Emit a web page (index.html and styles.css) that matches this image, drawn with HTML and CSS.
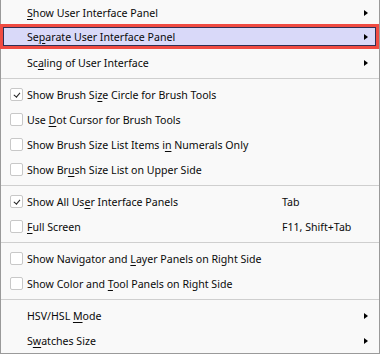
FILE: index.html
```html
<!DOCTYPE html>
<html>
<head>
<meta charset="utf-8">
<link rel="stylesheet" href="styles.css">
</head>
<body>
<div class="menu">
  <div class="item sub"><span class="label"><u>S</u>how User Interface Panel</span><span class="arrow"></span></div>
  <div class="item sub active"><span class="label">Se<u>p</u>arate User Interface Panel</span><span class="arrow"></span></div>
  <div class="item sub"><span class="label">Sc<u>a</u>ling of User Interface</span><span class="arrow"></span></div>
  <div class="sep"></div>
  <div class="item"><span class="check on"></span><span class="label">Show Brush Si<u>z</u>e Circle for Brush Tools</span></div>
  <div class="item"><span class="check"></span><span class="label">Use <u>D</u>ot Cursor for Brush Tools</span></div>
  <div class="item"><span class="check"></span><span class="label">Show Brush Size List Items i<u>n</u> Numerals Only</span></div>
  <div class="item"><span class="check"></span><span class="label">Show Br<u>u</u>sh Size List on Upper Side</span></div>
  <div class="sep"></div>
  <div class="item"><span class="check on"></span><span class="label">Show All Us<u>e</u>r Interface Panels</span><span class="key">Tab</span></div>
  <div class="item"><span class="check"></span><span class="label"><u>F</u>ull Screen</span><span class="key">F11, Shift+Tab</span></div>
  <div class="sep"></div>
  <div class="item"><span class="check"></span><span class="label">Show Navigator and <u>L</u>ayer Panels on Right Side</span></div>
  <div class="item"><span class="check"></span><span class="label">Show Color and <u>T</u>ool Panels on Right Side</span></div>
  <div class="sep"></div>
  <div class="item sub"><span class="label">HSV/HSL <u>M</u>ode</span><span class="arrow"></span></div>
  <div class="item sub"><span class="label">S<u>w</u>atches Size</span><span class="arrow"></span></div>
</div>
</body>
</html>
```
FILE: styles.css
```css
html, body {
  margin: 0;
  padding: 0;
  background: #ffffff;
}
.menu {
  width: 378px;
  background: #f9f9f9;
  border: 1px solid #9a9a9a;
  border-top: none;
  font-family: "Noto Sans", "Open Sans", sans-serif;
  font-size: 10.6px;
  color: #0a0a0a;
}
.item {
  position: relative;
  display: flex;
  align-items: center;
  height: 25px;
  padding-left: 26px;
}
.item .label {
  flex: 1;
  white-space: nowrap;
}
.item u {
  text-underline-offset: 2px;
}
.check {
  position: absolute;
  left: 9px;
  top: 6px;
  width: 11px;
  height: 11px;
  border: 1px solid #c8c8c8;
  border-radius: 2px;
  background: #fff;
}
.check.on::after {
  content: "";
  position: absolute;
  left: 3.5px;
  top: 2px;
  width: 2.5px;
  height: 5px;
  border-right: 1.3px solid #222;
  border-bottom: 1.3px solid #222;
  transform: rotate(40deg);
}
.key {
  position: absolute;
  left: 281px;
  white-space: nowrap;
}
.arrow {
  width: 0;
  height: 0;
  margin-right: 11px;
  border-top: 3.5px solid transparent;
  border-bottom: 3.5px solid transparent;
  border-left: 4px solid #000;
}
.sep {
  height: 1px;
  margin: 3px 0 3px 0;
  background: #cfcfcf;
}
.active {
  background: #d9d9f9;
  box-shadow: inset 0 0 0 3px #f04b42, inset 0 0 0 4px #2f2f55;
  margin: -1px 0 1px -1px;
  padding-left: 27px;
}
```
